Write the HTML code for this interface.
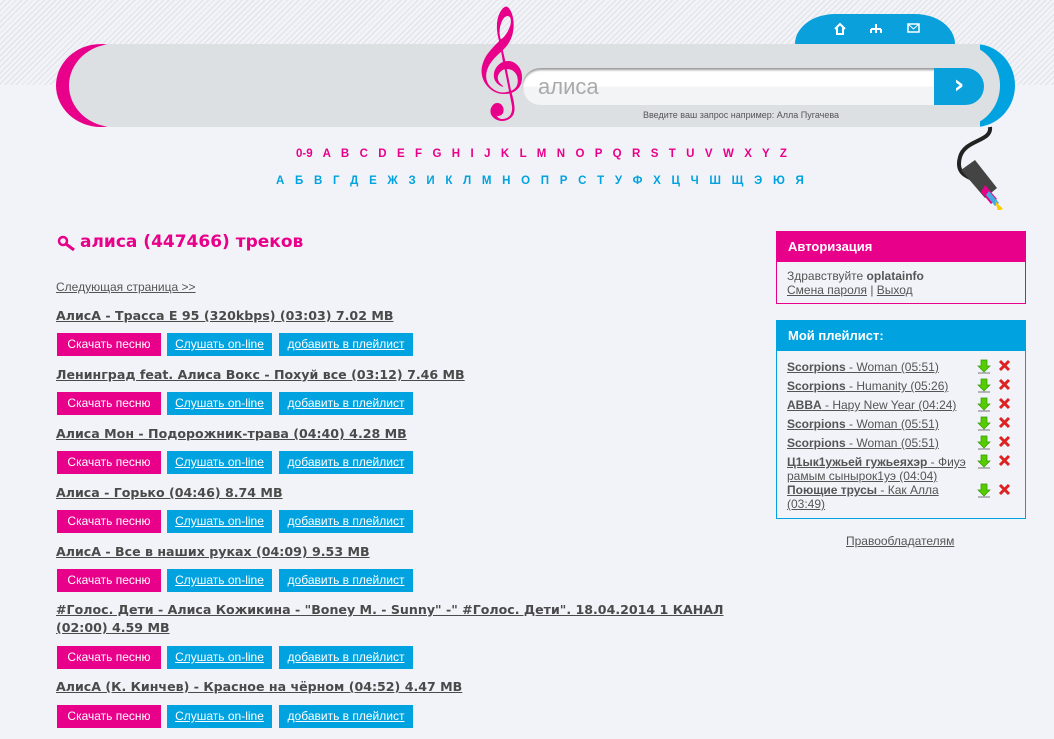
<!DOCTYPE html>
<html><head><meta charset="utf-8"><style>
body{margin:0;width:1054px;height:739px;overflow:hidden;background:#f2f3f8;font-family:"Liberation Sans",Tahoma,sans-serif;position:relative;color:#555}
.stripes{position:absolute;left:0;top:0;width:1054px;height:85px;background:repeating-linear-gradient(135deg,#f2f3f8 0 3px,#dfe1e6 3px 4px)}
.a{position:absolute}
.bar{left:110px;top:44px;width:870px;height:83px;background:#dce0e2}
.lc{left:56px;top:44px;width:90px;height:83px;border-radius:50%;background:#e8008a}
.lc2{left:69px;top:44px;width:90px;height:83px;border-radius:50%;background:#dce0e2}
.rc{left:935px;top:44px;width:80px;height:83px;border-radius:50%;background:#00a3e0}
.rc2{left:920px;top:44px;width:80px;height:83px;border-radius:50%;background:#dce0e2}
.tab{left:795px;top:14px;width:160px;height:32px;background:#0aa0dc;border-radius:40px 40px 0 0/30px 30px 0 0}
.inp{left:522px;top:68px;width:440px;height:37px;border-radius:19px;background:linear-gradient(#fff 0 50%,#f3f4f6 50%);box-shadow:inset 0 2px 2px #999;font-size:22px;color:#aaa;line-height:37px;text-indent:16px}
.go{left:934px;top:68px;width:50px;height:37px;border-radius:0 19px 19px 0;background:#0aa0dc;color:#fff;font-size:26px;font-weight:bold;text-align:center;line-height:35px;font-family:"DejaVu Sans",sans-serif}
.hint{left:643px;top:110px;font-size:9px;color:#555}
.row{font-weight:bold;font-size:11.5px;white-space:nowrap}
h1{position:absolute;left:80px;top:232px;margin:0;font-size:17px;color:#e8008a;font-family:"DejaVu Sans",sans-serif}
.next{left:56px;top:280px;font-size:12px;color:#555;text-decoration:underline}
.t{position:absolute;left:56px;font-size:12.6px;font-weight:bold;color:#4a4a4a;text-decoration:underline;line-height:18px;width:680px;font-family:"DejaVu Sans",sans-serif}
.b{position:absolute;height:23px;line-height:23px;font-size:12px;color:#fff;text-align:center}
.p{left:57px;width:104px;background:#e8008a}
.c{left:167px;width:105px;background:#00a3e0;text-decoration:underline}
.d{left:279px;width:134px;background:#00a3e0;text-decoration:underline}
.box{position:absolute;left:776px;width:248px;font-size:12px}
.hd{color:#fff;font-weight:bold;font-size:13px;padding-left:11px;line-height:31px;height:31px}
.pl{position:absolute;left:787px;font-size:12px;color:#555;text-decoration:underline;line-height:14px;width:182px;word-break:break-all}
</style></head><body>
<div class="stripes"></div>
<div class="a tab"></div>
<svg class="a" style="left:833px;top:22px" width="90" height="14"><path d="M2 7l5-5 5 5M4 6v6h6V6" fill="none" stroke="#fff" stroke-width="2"/><path d="M43 2v4M38 7h10M38 7v4M43 7v4M48 7v4" stroke="#fff" stroke-width="2"/><rect x="75" y="2" width="11" height="8" fill="none" stroke="#fff" stroke-width="1.5"/><path d="M75 2l5.5 5 5.5-5" fill="none" stroke="#fff"/></svg>
<div class="a lc"></div><div class="a lc2"></div><div class="a rc"></div><div class="a rc2"></div><div class="a bar"></div>
<div class="a" style="left:470px;top:6px;width:46px;height:108px;color:#e8008a;font-size:96px;line-height:108px;text-align:center;font-family:'DejaVu Sans',sans-serif">𝄞</div>
<div class="a inp">алиса</div>
<div class="a go">›</div>
<div class="a hint">Введите ваш запрос например: Алла Пугачева</div>
<svg class="a" style="left:945px;top:125px" width="65" height="85"><path d="M45 2c2 15-25 12-30 30s10 20 12 22" fill="none" stroke="#222" stroke-width="4"/><path d="M16 45l14-10 22 28-12 10z" fill="#444"/><path d="M40 60l12 14-6 5-10-12z" fill="#e8008a"/><path d="M44 66l10 12-4 3-9-11z" fill="#4ad"/><path d="M50 76l8 8-5 2z" fill="#fc0"/></svg>
<div class="a row" style="left:296px;top:148px;color:#e8008a;word-spacing:7.2px">0-9 A B C D E F G H I J K L M N O P Q R S T U V W X Y Z</div>
<div class="a row" style="left:276px;top:175px;color:#00a3e0;word-spacing:7.5px">А Б В Г Д Е Ж З И К Л М Н О П Р С Т У Ф Х Ц Ч Ш Щ Э Ю Я</div>
<svg class="a" style="left:57px;top:235px" width="20" height="16"><circle cx="6" cy="6" r="4" fill="none" stroke="#e8008a" stroke-width="2.5"/><path d="M9 9l8 6" stroke="#e8008a" stroke-width="3"/></svg>
<h1>алиса (447466) треков</h1>
<div class="a next">Следующая страница &gt;&gt;</div>

<div class="t" style="top:307px">АлисА - Трасса Е 95 (320kbps) (03:03) 7.02 MB</div>
<div class="b p" style="top:333px">Скачать песню</div><div class="b c" style="top:333px">Слушать on-line</div><div class="b d" style="top:333px">добавить в плейлист</div>
<div class="t" style="top:366px">Ленинград feat. Алиса Вокс - Похуй все (03:12) 7.46 MB</div>
<div class="b p" style="top:392px">Скачать песню</div><div class="b c" style="top:392px">Слушать on-line</div><div class="b d" style="top:392px">добавить в плейлист</div>
<div class="t" style="top:425px">Алиса Мон - Подорожник-трава (04:40) 4.28 MB</div>
<div class="b p" style="top:451px">Скачать песню</div><div class="b c" style="top:451px">Слушать on-line</div><div class="b d" style="top:451px">добавить в плейлист</div>
<div class="t" style="top:484px">Алиса - Горько (04:46) 8.74 MB</div>
<div class="b p" style="top:510px">Скачать песню</div><div class="b c" style="top:510px">Слушать on-line</div><div class="b d" style="top:510px">добавить в плейлист</div>
<div class="t" style="top:543px">АлисА - Все в наших руках (04:09) 9.53 MB</div>
<div class="b p" style="top:569px">Скачать песню</div><div class="b c" style="top:569px">Слушать on-line</div><div class="b d" style="top:569px">добавить в плейлист</div>
<div class="t" style="top:601px">#Голос. Дети - Алиса Кожикина - "Boney M. - Sunny" -" #Голос. Дети". 18.04.2014 1 КАНАЛ<br>(02:00) 4.59 MB</div>
<div class="b p" style="top:646px">Скачать песню</div><div class="b c" style="top:646px">Слушать on-line</div><div class="b d" style="top:646px">добавить в плейлист</div>
<div class="t" style="top:678px">АлисА (К. Кинчев) - Красное на чёрном (04:52) 4.47 MB</div>
<div class="b p" style="top:705px">Скачать песню</div><div class="b c" style="top:705px">Слушать on-line</div><div class="b d" style="top:705px">добавить в плейлист</div>

<div class="box" style="top:231px;height:72px;border:1px solid #e8008a;border-top:0"><div class="hd" style="background:#e8008a">Авторизация</div><div style="padding:7px 10px;line-height:14px">Здравствуйте <b>oplatainfo</b><br><u>Смена пароля</u> | <u>Выход</u></div></div>
<div class="box" style="top:320px;height:198px;border:1px solid #00a3e0;border-top:0"><div class="hd" style="background:#00a3e0">Мой плейлист:</div></div>
<div class="pl" style="top:360px"><b>Scorpions</b> - Woman (05:51)</div>
<div class="pl" style="top:379px"><b>Scorpions</b> - Humanity (05:26)</div>
<div class="pl" style="top:398px"><b>ABBA</b> - Hapy New Year (04:24)</div>
<div class="pl" style="top:417px"><b>Scorpions</b> - Woman (05:51)</div>
<div class="pl" style="top:436px"><b>Scorpions</b> - Woman (05:51)</div>
<div class="pl" style="top:455px"><b>Ц1ык1ужьей гужьеяхэр</b> - Фиуэрамым сынырок1уэ (04:04)</div>
<div class="pl" style="top:483px;word-break:normal"><b>Поющие трусы</b> - Как Алла (03:49)</div>
<svg class="a" style="left:976px;top:358px" width="40" height="140">
<g id="r"><path d="M5 2h6v6h3l-6 6-6-6h3z" fill="#5c0" stroke="#390" stroke-width=".7"/><path d="M2 15h12" stroke="#777"/><path d="M24 3l9 9M33 3l-9 9" stroke="#d22" stroke-width="3"/></g>
<use href="#r" y="19"/><use href="#r" y="38"/><use href="#r" y="57"/><use href="#r" y="76"/><use href="#r" y="95"/><use href="#r" y="124"/>
</svg>
<div class="a" style="left:846px;top:534px;font-size:12px;text-decoration:underline">Правообладателям</div>
</body></html>
